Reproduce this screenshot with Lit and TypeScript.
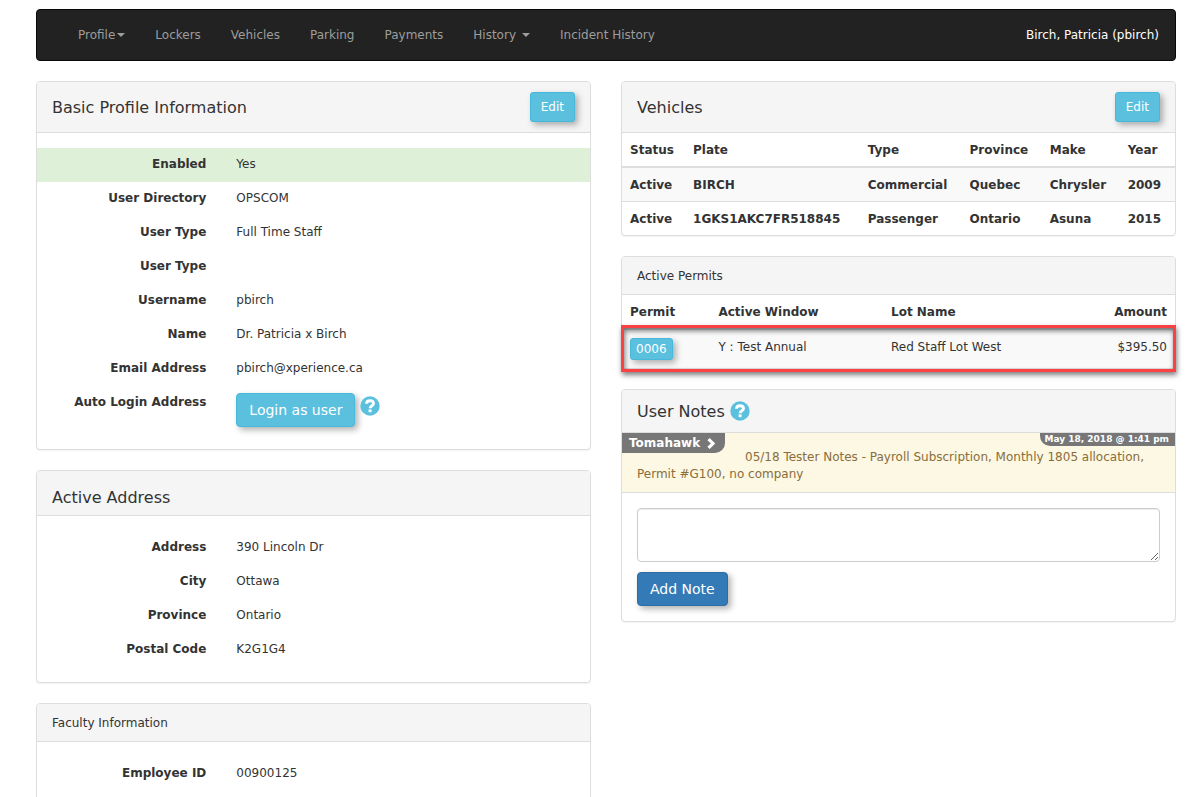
import { LitElement, html, css, nothing, TemplateResult } from "lit";
import { customElement } from "lit/decorators.js";

type Field = { label: string; value: string | TemplateResult; highlight?: boolean };

const helpIcon = html`<svg class="help" viewBox="0 0 20 20" role="img" aria-label="Help">
  <circle cx="10" cy="10" r="9.7" fill="#5bc0de"></circle>
  <path
    d="M6.5 7.7C6.6 5.6 7.9 4.7 9.9 4.7c2.2 0 3.6 1 3.6 2.8 0 2.3-3.4 2.1-3.4 4.8"
    fill="none"
    stroke="#fff"
    stroke-width="2.9"
  ></path>
  <rect x="8.6" y="13.4" width="3" height="2.8" fill="#fff"></rect>
</svg>`;

@customElement("app-root")
export class AppRoot extends LitElement {
  static styles = css`
    :host {
      display: block;
      padding: 9px 24px 0 36px;
      font: 12px/17px "DejaVu Sans", Verdana, sans-serif;
      color: #333;
      background: #fff;
    }
    * {
      box-sizing: border-box;
    }
    .navbar {
      display: flex;
      align-items: center;
      min-height: 52px;
      padding: 0 1px 0 26px;
      margin-bottom: 20px;
      background: #222;
      border: 1px solid #080808;
      border-radius: 4px;
    }
    .navbar a {
      display: flex;
      align-items: center;
      padding: 15px;
      color: #9d9d9d;
      text-decoration: none;
      white-space: nowrap;
    }
    .navbar .user {
      margin-left: auto;
      color: #fff;
    }
    .caret {
      margin-left: 2px;
      border-top: 4px solid;
      border-left: 4px solid transparent;
      border-right: 4px solid transparent;
    }
    .caret.spaced {
      margin-left: 6px;
    }
    .columns {
      display: grid;
      grid-template-columns: 1fr 1fr;
      gap: 30px;
      align-items: start;
    }
    .column {
      display: grid;
      gap: 20px;
      min-width: 0;
    }
    .panel {
      background: #fff;
      border: 1px solid #ddd;
      border-radius: 4px;
      box-shadow: 0 1px 1px rgba(0, 0, 0, 0.05);
    }
    .heading {
      display: flex;
      align-items: center;
      justify-content: space-between;
      padding: 10px 15px;
      background: #f5f5f5;
      border-bottom: 1px solid #ddd;
      border-radius: 3px 3px 0 0;
    }
    .heading.small {
      padding: 11px 15px 9px;
    }
    .heading.low {
      padding: 16px 15px 8px;
    }
    .heading.notes {
      padding: 11px 15px;
      justify-content: flex-start;
      gap: 5px;
    }
    h2,
    h3 {
      margin: 0;
      font-weight: 400;
    }
    h2 {
      padding-top: 2px;
      font-size: 16px;
      line-height: 18px;
    }
    h3 {
      font-size: 12px;
      line-height: 17px;
    }
    .fields {
      margin: 0;
      padding: 15px 0;
    }
    .field {
      display: grid;
      grid-template-columns: 1fr 2fr;
      min-height: 34px;
    }
    .field.on {
      background: #dff0d8;
    }
    dt,
    dd {
      margin: 0;
      padding: 8px 15px 6px;
    }
    dt {
      font-weight: 700;
      text-align: right;
    }
    dd.control {
      padding: 7px 15px;
    }
    .login {
      display: flex;
      gap: 5px;
    }
    .login .help {
      margin-top: 3px;
    }
    .help {
      display: block;
      width: 20px;
      height: 20px;
    }
    .btn {
      font: inherit;
      color: #fff;
      background: #5bc0de;
      border: 1px solid #46b8da;
      border-radius: 4px;
      box-shadow: 3px 3px 6px rgba(0, 0, 0, 0.3);
      white-space: nowrap;
      cursor: pointer;
      font-size: 14px;
      line-height: 20px;
      padding: 6px 12px;
    }
    .btn.small {
      font-size: 12px;
      line-height: 18px;
      padding: 5px 10px;
      border-radius: 3px;
    }
    .btn.tiny {
      display: block;
      font-size: 12px;
      line-height: 18px;
      padding: 1px 5px;
      border-radius: 3px;
    }
    .btn.primary {
      background: #337ab7;
      border-color: #2e6da4;
    }
    table {
      width: 100%;
      border-collapse: separate;
      border-spacing: 0;
      table-layout: fixed;
    }
    th,
    td {
      padding: 9px 8px 7px;
      text-align: left;
      vertical-align: top;
      white-space: nowrap;
    }
    td.control {
      padding: 8px;
    }
    thead th {
      border-bottom: 2px solid #ddd;
    }
    tbody tr:nth-child(odd) {
      background: #f9f9f9;
    }
    tbody tr + tr td {
      border-top: 1px solid #ddd;
    }
    .vehicles td {
      font-weight: 700;
    }
    .amount {
      text-align: right;
    }
    .w-status { width: 11.4%; }
    .w-plate { width: 31.6%; }
    .w-type { width: 18.4%; }
    .w-province { width: 14.5%; }
    .w-make { width: 14.1%; }
    .w-permit { width: 16%; }
    .w-window { width: 31.2%; }
    .w-amount { width: 16%; }
    .marked {
      position: relative;
    }
    .marker {
      position: absolute;
      inset: 30px -1px -4px -1px;
      border: 3px solid #fb4143;
      box-shadow: 1px 3px 5px rgba(0, 0, 0, 0.5), inset 1px 3px 5px rgba(0, 0, 0, 0.5);
      pointer-events: none;
    }
    .note {
      position: relative;
      padding: 16px 15px 9px;
      color: #8a6d3b;
      background: #fcf8e3;
      border-bottom: 1px solid #ddd;
    }
    .note p {
      margin: 0;
      text-indent: 108px;
    }
    .author,
    .stamp {
      position: absolute;
      top: 0;
      display: flex;
      align-items: center;
      color: #fff;
      background: #777;
      font-weight: 700;
    }
    .author {
      left: 0;
      gap: 7px;
      padding: 0 9px 0 7px;
      line-height: 20px;
      border-bottom-right-radius: 10px;
    }
    .author svg {
      width: 9px;
      height: 11px;
    }
    .stamp {
      right: 0;
      padding: 0 6px 0 5px;
      font-size: 9px;
      line-height: 13px;
      border-bottom-left-radius: 10px;
    }
    .compose {
      display: grid;
      justify-items: start;
      gap: 10px;
      padding: 15px;
    }
    textarea {
      display: block;
      width: 100%;
      height: 54px;
      padding: 6px 12px;
      font: inherit;
      color: #555;
      background: #fff;
      border: 1px solid #ccc;
      border-radius: 4px;
      box-shadow: inset 0 1px 1px rgba(0, 0, 0, 0.075);
      resize: vertical;
    }
  `;

  private profile: Field[] = [
    { label: "Enabled", value: "Yes", highlight: true },
    { label: "User Directory", value: "OPSCOM" },
    { label: "User Type", value: "Full Time Staff" },
    { label: "User Type", value: "" },
    { label: "Username", value: "pbirch" },
    { label: "Name", value: "Dr. Patricia x Birch" },
    { label: "Email Address", value: "pbirch@xperience.ca" },
    {
      label: "Auto Login Address",
      value: html`<div class="login"><button class="btn" type="button">Login as user</button>${helpIcon}</div>`,
    },
  ];

  private address: Field[] = [
    { label: "Address", value: "390 Lincoln Dr" },
    { label: "City", value: "Ottawa" },
    { label: "Province", value: "Ontario" },
    { label: "Postal Code", value: "K2G1G4" },
  ];

  private faculty: Field[] = [{ label: "Employee ID", value: "00900125" }];

  private vehicles = [
    ["Active", "BIRCH", "Commercial", "Quebec", "Chrysler", "2009"],
    ["Active", "1GKS1AKC7FR518845", "Passenger", "Ontario", "Asuna", "2015"],
  ];

  private fields(items: Field[]) {
    return html`<dl class="fields">
      ${items.map(
        (f) => html`<div class="field ${f.highlight ? "on" : ""}">
          <dt>${f.label}</dt>
          <dd class=${typeof f.value === "string" ? "text" : "control"}>${f.value || nothing}</dd>
        </div>`
      )}
    </dl>`;
  }

  render() {
    return html`
      <nav class="navbar">
        <a href="#profile">Profile<span class="caret"></span></a>
        <a href="#lockers">Lockers</a>
        <a href="#vehicles">Vehicles</a>
        <a href="#parking">Parking</a>
        <a href="#payments">Payments</a>
        <a href="#history">History<span class="caret spaced"></span></a>
        <a href="#incidents">Incident History</a>
        <a class="user" href="#account">Birch, Patricia (pbirch)</a>
      </nav>
      <main class="columns">
        <div class="column">
          <section class="panel">
            <header class="heading">
              <h2>Basic Profile Information</h2>
              <button class="btn small" type="button">Edit</button>
            </header>
            ${this.fields(this.profile)}
          </section>
          <section class="panel">
            <header class="heading low"><h2>Active Address</h2></header>
            ${this.fields(this.address)}
          </section>
          <section class="panel">
            <header class="heading small"><h3>Faculty Information</h3></header>
            ${this.fields(this.faculty)}
          </section>
        </div>
        <div class="column">
          <section class="panel">
            <header class="heading">
              <h2>Vehicles</h2>
              <button class="btn small" type="button">Edit</button>
            </header>
            <table class="vehicles">
              <thead>
                <tr>
                  <th class="w-status">Status</th>
                  <th class="w-plate">Plate</th>
                  <th class="w-type">Type</th>
                  <th class="w-province">Province</th>
                  <th class="w-make">Make</th>
                  <th>Year</th>
                </tr>
              </thead>
              <tbody>
                ${this.vehicles.map((v) => html`<tr>${v.map((cell) => html`<td>${cell}</td>`)}</tr>`)}
              </tbody>
            </table>
          </section>
          <section class="panel">
            <header class="heading small"><h3>Active Permits</h3></header>
            <div class="marked">
              <table>
                <thead>
                  <tr>
                    <th class="w-permit">Permit</th>
                    <th class="w-window">Active Window</th>
                    <th>Lot Name</th>
                    <th class="w-amount amount">Amount</th>
                  </tr>
                </thead>
                <tbody>
                  <tr>
                    <td class="control"><button class="btn tiny" type="button">0006</button></td>
                    <td>Y : Test Annual</td>
                    <td>Red Staff Lot West</td>
                    <td class="amount">$395.50</td>
                  </tr>
                </tbody>
              </table>
              <div class="marker"></div>
            </div>
          </section>
          <section class="panel">
            <header class="heading notes"><h2>User Notes</h2>${helpIcon}</header>
            <article class="note">
              <div class="author">
                Tomahawk
                <svg viewBox="0 0 9 12" aria-hidden="true">
                  <path d="M0 2.4 2.5 0 8.6 6 2.5 12 0 9.6 3.7 6z" fill="#fff"></path>
                </svg>
              </div>
              <time class="stamp">May 18, 2018 @ 1:41 pm</time>
              <p>05/18 Tester Notes - Payroll Subscription, Monthly 1805 allocation, Permit #G100, no company</p>
            </article>
            <form class="compose">
              <textarea aria-label="New note"></textarea>
              <button class="btn primary" type="button">Add Note</button>
            </form>
          </section>
        </div>
      </main>
    `;
  }
}
